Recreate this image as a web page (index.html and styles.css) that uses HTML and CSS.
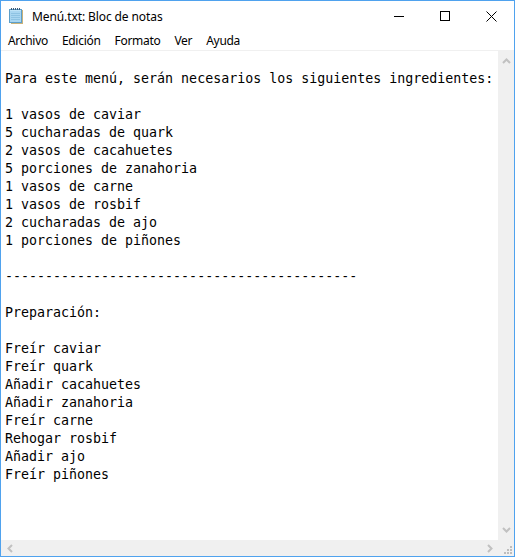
FILE: index.html
```html
<!DOCTYPE html>
<html lang="es">
<head>
<meta charset="utf-8">
<title>Menú.txt: Bloc de notas</title>
<link rel="stylesheet" href="styles.css">
</head>
<body>
<div class="window">
  <div class="titlebar">
    <svg class="app-icon" width="18" height="18" viewBox="0 0 18 18">
      <rect x="4" y="3" width="12" height="14" fill="#c9b27a"/>
      <rect x="2.5" y="2.5" width="12" height="13" fill="#bfe3f7" stroke="#5c9ec9"/>
      <rect x="3" y="4" width="11" height="11" fill="#a9d6f1"/>
      <line x1="4" y1="6.5" x2="13" y2="6.5" stroke="#8ec3e3"/>
      <line x1="4" y1="8.5" x2="13" y2="8.5" stroke="#8ec3e3"/>
      <line x1="4" y1="10.5" x2="13" y2="10.5" stroke="#8ec3e3"/>
      <line x1="4" y1="12.5" x2="13" y2="12.5" stroke="#8ec3e3"/>
      <g fill="#3a5a78">
        <rect x="4" y="1" width="1" height="2"/>
        <rect x="6" y="1" width="1" height="2"/>
        <rect x="8" y="1" width="1" height="2"/>
        <rect x="10" y="1" width="1" height="2"/>
        <rect x="12" y="1" width="1" height="2"/>
      </g>
    </svg>
    <span class="title">Menú.txt: Bloc de notas</span>
    <div class="controls">
      <div class="ctl">
        <svg width="10" height="10" viewBox="0 0 10 10"><line x1="0" y1="5.5" x2="10" y2="5.5" stroke="#000"/></svg>
      </div>
      <div class="ctl">
        <svg width="10" height="10" viewBox="0 0 10 10"><rect x="0.5" y="0.5" width="9" height="9" fill="none" stroke="#000"/></svg>
      </div>
      <div class="ctl">
        <svg width="11" height="11" viewBox="0 0 11 11"><path d="M0.5 0.5 L10.5 10.5 M10.5 0.5 L0.5 10.5" stroke="#000" stroke-width="1"/></svg>
      </div>
    </div>
  </div>
  <div class="menubar">
    <span class="menu-item">Archivo</span>
    <span class="menu-item">Edición</span>
    <span class="menu-item">Formato</span>
    <span class="menu-item">Ver</span>
    <span class="menu-item">Ayuda</span>
  </div>
  <div class="client">
    <pre class="editor">

Para este menú, serán necesarios los siguientes ingredientes:

1 vasos de caviar
5 cucharadas de quark
2 vasos de cacahuetes
5 porciones de zanahoria
1 vasos de carne
1 vasos de rosbif
2 cucharadas de ajo
1 porciones de piñones

--------------------------------------------

Preparación:

Freír caviar
Freír quark
Añadir cacahuetes
Añadir zanahoria
Freír carne
Rehogar rosbif
Añadir ajo
Freír piñones</pre>
    <div class="vscroll">
      <svg class="arrow" width="9" height="6" viewBox="0 0 9 6"><path d="M1 5 L4.5 1.5 L8 5" fill="none" stroke="#c1c1c1" stroke-width="2"/></svg>
      <svg class="arrow" width="9" height="6" viewBox="0 0 9 6"><path d="M1 1 L4.5 4.5 L8 1" fill="none" stroke="#c1c1c1" stroke-width="2"/></svg>
    </div>
    <div class="hscroll">
      <svg class="arrow" width="6" height="9" viewBox="0 0 6 9"><path d="M5 1 L1.5 4.5 L5 8" fill="none" stroke="#c1c1c1" stroke-width="2"/></svg>
      <svg class="arrow" width="6" height="9" viewBox="0 0 6 9"><path d="M1 1 L4.5 4.5 L1 8" fill="none" stroke="#c1c1c1" stroke-width="2"/></svg>
    </div>
    <div class="corner">
      <svg width="9" height="8" viewBox="0 0 9 8">
        <g fill="#bdbdbd">
          <rect x="6" y="0" width="2" height="2"/>
          <rect x="3" y="3" width="2" height="2"/>
          <rect x="6" y="3" width="2" height="2"/>
          <rect x="0" y="6" width="2" height="2"/>
          <rect x="3" y="6" width="2" height="2"/>
          <rect x="6" y="6" width="2" height="2"/>
        </g>
      </svg>
    </div>
  </div>
</div>
</body>
</html>
```

FILE: styles.css
```css
* { box-sizing: border-box; }
html, body { margin: 0; padding: 0; background: #fff; }
.window {
  width: 515px;
  height: 557px;
  border: 1px solid #4fa2ee;
  display: flex;
  flex-direction: column;
  background: #fff;
  overflow: hidden;
}
.titlebar {
  height: 30px;
  display: flex;
  align-items: center;
  flex: none;
  font-family: "Noto Sans", "Open Sans", sans-serif;
  font-size: 12px;
  color: #000;
}
.app-icon { margin-left: 6px; margin-top: -1px; flex: none; }
.title { margin-left: 7px; letter-spacing: -0.1px; }
.controls { margin-left: auto; display: flex; height: 30px; }
.ctl {
  width: 46px;
  height: 30px;
  display: flex;
  align-items: center;
  justify-content: center;
}
.ctl svg { display: block; }
.menubar {
  height: 19px;
  flex: none;
  display: flex;
  align-items: center;
  padding-left: 7px;
  gap: 14px;
  font-family: "Noto Sans", "Open Sans", sans-serif;
  font-size: 12px;
  color: #000;
}
.menu-item { letter-spacing: -0.3px; }
.client {
  flex: 1;
  display: grid;
  grid-template-columns: 1fr 16px;
  grid-template-rows: 1fr 16px;
  border-top: 1px solid #f0f0f0;
  min-height: 0;
}
.editor {
  margin: 0;
  padding: 1px 0 0 4px;
  font-family: "DejaVu Sans Mono", "Liberation Mono", monospace;
  font-size: 13.3px;
  line-height: 18px;
  color: #000;
  background: #fff;
  overflow: hidden;
  white-space: pre;
}
.vscroll {
  background: #f0f0f0;
  display: flex;
  flex-direction: column;
  justify-content: space-between;
  align-items: center;
  padding: 7px 0 7px;
}
.hscroll {
  background: #f0f0f0;
  display: flex;
  justify-content: space-between;
  align-items: center;
  padding: 0 5px 0 6px;
}
.corner {
  background: #f0f0f0;
  display: flex;
  align-items: flex-end;
  justify-content: flex-end;
  padding: 0 1px 2px 0;
}
.arrow { display: block; }
```
